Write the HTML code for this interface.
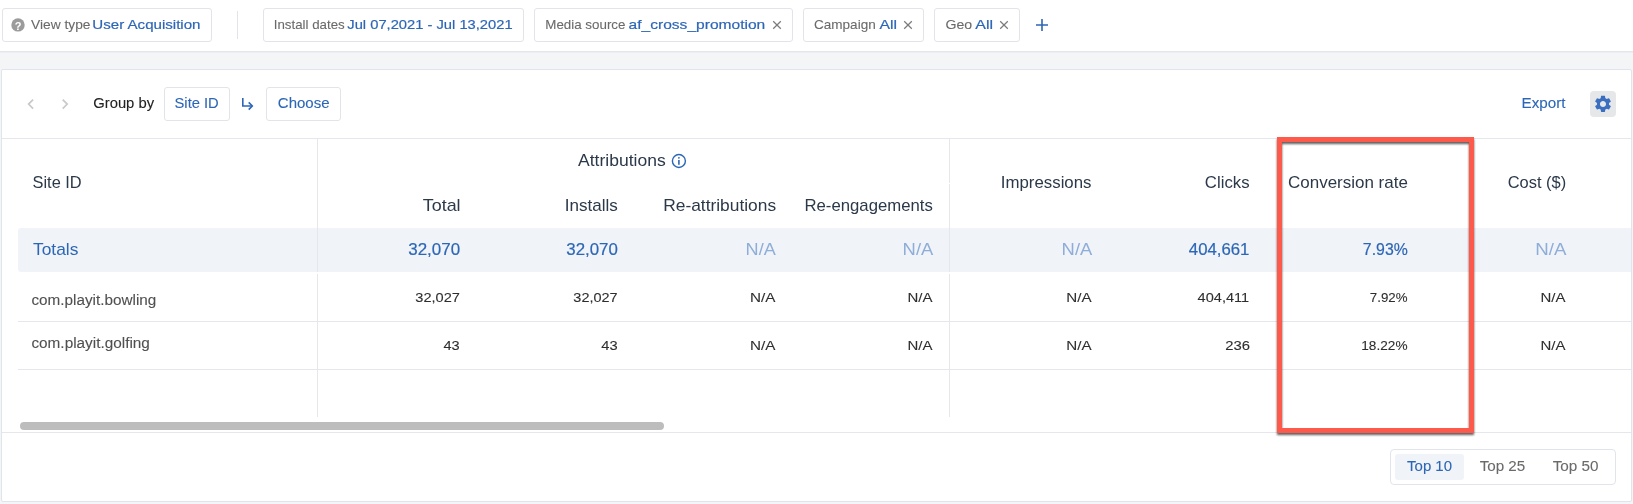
<!DOCTYPE html>
<html><head><meta charset="utf-8"><style>
html,body{margin:0;padding:0;}
body{width:1633px;height:504px;position:relative;overflow:hidden;background:#f4f5f7;font-family:"Liberation Sans",sans-serif;}
svg{position:absolute;left:0;top:0;will-change:transform;}
svg text{font-family:"Liberation Sans",sans-serif;}
</style></head><body>
<div style="position:absolute;left:0px;top:0px;width:1633px;height:51px;box-sizing:border-box;background:#fff"></div><div style="position:absolute;left:0px;top:51px;width:1633px;height:1px;box-sizing:border-box;background:#e3e6eb"></div><div style="position:absolute;left:0px;top:52px;width:1633px;height:1px;box-sizing:border-box;background:#eceef1"></div><div style="position:absolute;left:2px;top:8px;width:210px;height:34px;box-sizing:border-box;border:1px solid #e1e4ea;border-radius:3px;background:#fff"></div><div style="position:absolute;left:263px;top:8px;width:261px;height:34px;box-sizing:border-box;border:1px solid #e1e4ea;border-radius:3px;background:#fff"></div><div style="position:absolute;left:534px;top:8px;width:259px;height:34px;box-sizing:border-box;border:1px solid #e1e4ea;border-radius:3px;background:#fff"></div><div style="position:absolute;left:803px;top:8px;width:121px;height:34px;box-sizing:border-box;border:1px solid #e1e4ea;border-radius:3px;background:#fff"></div><div style="position:absolute;left:934px;top:8px;width:86px;height:34px;box-sizing:border-box;border:1px solid #e1e4ea;border-radius:3px;background:#fff"></div><div style="position:absolute;left:237px;top:11px;width:1px;height:28px;box-sizing:border-box;background:#e1e4ea"></div><div style="position:absolute;left:1px;top:69px;width:1631px;height:433px;box-sizing:border-box;border:1px solid #e1e4ea;border-radius:2px;background:#fff"></div><div style="position:absolute;left:164px;top:87px;width:66px;height:34px;box-sizing:border-box;border:1px solid #e1e4ea;border-radius:3px"></div><div style="position:absolute;left:266px;top:87px;width:75px;height:34px;box-sizing:border-box;border:1px solid #e1e4ea;border-radius:3px"></div><div style="position:absolute;left:1590px;top:91px;width:26px;height:26px;box-sizing:border-box;background:#e6e7e9;border-radius:4px"></div><div style="position:absolute;left:2px;top:138px;width:1629px;height:1px;box-sizing:border-box;background:#e5e7ed"></div><div style="position:absolute;left:18px;top:228px;width:1613px;height:44px;box-sizing:border-box;background:#f0f3f8;border-radius:3px 0 0 3px"></div><div style="position:absolute;left:317px;top:139px;width:1px;height:133px;box-sizing:border-box;background:#e5e7ed"></div><div style="position:absolute;left:317px;top:274px;width:1px;height:143px;box-sizing:border-box;background:#e5e7ed"></div><div style="position:absolute;left:949px;top:139px;width:1px;height:44px;box-sizing:border-box;background:#e5e7ed"></div><div style="position:absolute;left:949px;top:184px;width:1px;height:88px;box-sizing:border-box;background:#e5e7ed"></div><div style="position:absolute;left:949px;top:274px;width:1px;height:143px;box-sizing:border-box;background:#e5e7ed"></div><div style="position:absolute;left:18px;top:321px;width:1613px;height:1px;box-sizing:border-box;background:#e5e7ed"></div><div style="position:absolute;left:18px;top:369px;width:1613px;height:1px;box-sizing:border-box;background:#e5e7ed"></div><div style="position:absolute;left:20px;top:422px;width:644px;height:8px;box-sizing:border-box;background:#bdbdbd;border-radius:4px"></div><div style="position:absolute;left:2px;top:432px;width:1629px;height:1px;box-sizing:border-box;background:#e5e7ed"></div><div style="position:absolute;left:1390px;top:449px;width:226px;height:36px;box-sizing:border-box;border:1px solid #e1e4ea;border-radius:4px"></div><div style="position:absolute;left:1395px;top:454px;width:69px;height:26px;box-sizing:border-box;background:#f0f3f8;border-radius:3px"></div>
<svg width="1633" height="504" viewBox="0 0 1633 504">

<circle cx="18" cy="24.9" r="6.7" fill="#9b9b9b"/>
<text x="18" y="29.6" font-size="11" font-weight="bold" fill="#fff" text-anchor="middle">?</text>
<g stroke="#7c7c7c" stroke-width="1.25" fill="none">
<path d="M773.2 21.2 L780.8 28.8 M780.8 21.2 L773.2 28.8"/>
<path d="M904.2 21.2 L911.8 28.8 M911.8 21.2 L904.2 28.8"/>
<path d="M1000.2 21.2 L1007.8 28.8 M1007.8 21.2 L1000.2 28.8"/>
</g>
<path d="M1036 25 H1048 M1042 19 V31" stroke="#2c66b6" stroke-width="1.6" fill="none"/>
<g stroke="#c9c9c9" stroke-width="1.7" fill="none">
<path d="M33.1 99.6 L28.6 104.1 L33.1 108.6"/>
<path d="M62.7 99.6 L67.2 104.1 L62.7 108.6"/>
</g>
<g stroke="#2c66b6" stroke-width="1.6" fill="none">
<path d="M242.8 98 V106 H252"/>
<path d="M248.7 102.4 L252.3 106 L248.7 109.6"/>
</g>
<circle cx="678.9" cy="161" r="6.5" stroke="#2c66b6" stroke-width="1.4" fill="none"/>
<path d="M678.9 160.1 V164.7" stroke="#2c66b6" stroke-width="1.6"/>
<circle cx="678.9" cy="157.8" r="0.9" fill="#2c66b6"/>

<path transform="translate(1592.920 93.820) scale(0.84)" d="M19.14,12.94c0.04-0.3,0.06-0.61,0.06-0.94c0-0.32-0.02-0.64-0.07-0.94l2.03-1.58c0.18-0.14,0.23-0.41,0.12-0.61l-1.92-3.32c-0.12-0.22-0.37-0.29-0.59-0.22l-2.39,0.96c-0.5-0.38-1.03-0.7-1.62-0.94L14.4,2.81c-0.04-0.24-0.24-0.41-0.48-0.41h-3.84c-0.24,0-0.43,0.17-0.47,0.41L9.25,5.35C8.66,5.59,8.12,5.92,7.63,6.29L5.24,5.33c-0.22-0.08-0.47,0-0.59,0.22L2.74,8.87C2.62,9.08,2.66,9.34,2.86,9.48l2.03,1.58C4.84,11.36,4.8,11.69,4.8,12s0.02,0.64,0.07,0.94l-2.03,1.58c-0.18,0.14-0.23,0.41-0.12,0.61l1.92,3.32c0.12,0.22,0.37,0.29,0.59,0.22l2.39-0.96c0.5,0.38,1.03,0.7,1.62,0.94l0.36,2.54c0.05,0.24,0.24,0.41,0.48,0.41h3.84c0.24,0,0.44-0.17,0.47-0.41l0.36-2.54c0.59-0.24,1.13-0.56,1.62-0.94l2.39,0.96c0.22,0.08,0.47,0,0.59-0.22l1.92-3.32c0.12-0.22,0.07-0.47-0.12-0.61L19.14,12.94z M12,15.6c-1.98,0-3.6-1.62-3.6-3.6s1.62-3.6,3.6-3.6s3.6,1.62,3.6,3.6S13.98,15.6,12,15.6z" fill="#3a6ebf"/>
<text x="31.08" y="29.00" font-size="13.5" fill="#6a6a6a" stroke="#6a6a6a" stroke-width="0.1" textLength="59.42" lengthAdjust="spacingAndGlyphs">View type</text><text x="92.30" y="29.00" font-size="13.5" fill="#2c66b6" stroke="#2c66b6" stroke-width="0.2" textLength="108.22" lengthAdjust="spacingAndGlyphs">User Acquisition</text><text x="273.77" y="29.00" font-size="13.5" fill="#6a6a6a" stroke="#6a6a6a" stroke-width="0.1" textLength="70.94" lengthAdjust="spacingAndGlyphs">Install dates</text><text x="347.30" y="29.00" font-size="13.5" fill="#2c66b6" stroke="#2c66b6" stroke-width="0.2" textLength="165.31" lengthAdjust="spacingAndGlyphs">Jul 07,2021 - Jul 13,2021</text><text x="545.27" y="29.00" font-size="13.5" fill="#6a6a6a" stroke="#6a6a6a" stroke-width="0.1" textLength="80.20" lengthAdjust="spacingAndGlyphs">Media source</text><text x="628.60" y="29.00" font-size="13.5" fill="#2c66b6" stroke="#2c66b6" stroke-width="0.2" textLength="136.66" lengthAdjust="spacingAndGlyphs">af_cross_promotion</text><text x="814.00" y="29.00" font-size="13.5" fill="#6a6a6a" stroke="#6a6a6a" stroke-width="0.1" textLength="61.72" lengthAdjust="spacingAndGlyphs">Campaign</text><text x="879.52" y="29.00" font-size="13.5" fill="#2c66b6" stroke="#2c66b6" stroke-width="0.2" textLength="17.54" lengthAdjust="spacingAndGlyphs">All</text><text x="945.42" y="29.00" font-size="13.5" fill="#6a6a6a" stroke="#6a6a6a" stroke-width="0.1" textLength="26.73" lengthAdjust="spacingAndGlyphs">Geo</text><text x="975.26" y="29.00" font-size="13.5" fill="#2c66b6" stroke="#2c66b6" stroke-width="0.2" textLength="17.77" lengthAdjust="spacingAndGlyphs">All</text><text x="93.24" y="108.00" font-size="14" fill="#222222" stroke="#222222" stroke-width="0.1" textLength="60.83" lengthAdjust="spacingAndGlyphs">Group by</text><text x="174.55" y="108.00" font-size="14" fill="#2c66b6" stroke="#2c66b6" stroke-width="0.1" textLength="44.18" lengthAdjust="spacingAndGlyphs">Site ID</text><text x="277.80" y="108.00" font-size="14" fill="#2c66b6" stroke="#2c66b6" stroke-width="0.1" textLength="51.70" lengthAdjust="spacingAndGlyphs">Choose</text><text x="1521.50" y="108.00" font-size="14" fill="#2c66b6" stroke="#2c66b6" stroke-width="0.1" textLength="43.97" lengthAdjust="spacingAndGlyphs">Export</text><text x="32.56" y="188.00" font-size="17" fill="#2b3949" stroke="#2b3949" stroke-width="0.0" textLength="49.17" lengthAdjust="spacingAndGlyphs">Site ID</text><text x="578.04" y="166.00" font-size="17" fill="#2b3949" stroke="#2b3949" stroke-width="0.0" textLength="87.61" lengthAdjust="spacingAndGlyphs">Attributions</text><text x="422.75" y="211.00" font-size="17" fill="#2b3949" stroke="#2b3949" stroke-width="0.0" textLength="37.84" lengthAdjust="spacingAndGlyphs">Total</text><text x="564.71" y="211.00" font-size="17" fill="#2b3949" stroke="#2b3949" stroke-width="0.0" textLength="53.09" lengthAdjust="spacingAndGlyphs">Installs</text><text x="663.21" y="211.00" font-size="17" fill="#2b3949" stroke="#2b3949" stroke-width="0.0" textLength="112.89" lengthAdjust="spacingAndGlyphs">Re-attributions</text><text x="804.51" y="211.00" font-size="17" fill="#2b3949" stroke="#2b3949" stroke-width="0.0" textLength="128.27" lengthAdjust="spacingAndGlyphs">Re-engagements</text><text x="1000.82" y="188.00" font-size="17" fill="#2b3949" stroke="#2b3949" stroke-width="0.0" textLength="90.68" lengthAdjust="spacingAndGlyphs">Impressions</text><text x="1204.87" y="188.00" font-size="17" fill="#2b3949" stroke="#2b3949" stroke-width="0.0" textLength="44.74" lengthAdjust="spacingAndGlyphs">Clicks</text><text x="1288.04" y="188.00" font-size="17" fill="#2b3949" stroke="#2b3949" stroke-width="0.0" textLength="119.85" lengthAdjust="spacingAndGlyphs">Conversion rate</text><text x="1507.74" y="188.00" font-size="17" fill="#2b3949" stroke="#2b3949" stroke-width="0.0" textLength="58.44" lengthAdjust="spacingAndGlyphs">Cost ($)</text><text x="32.96" y="255.00" font-size="17" fill="#2c66b6" stroke="#2c66b6" stroke-width="0.0" textLength="45.40" lengthAdjust="spacingAndGlyphs">Totals</text><text x="408.27" y="255.00" font-size="16.6" fill="#2c66b6" stroke="#2c66b6" stroke-width="0.2" textLength="51.80" lengthAdjust="spacingAndGlyphs">32,070</text><text x="566.28" y="255.00" font-size="16.6" fill="#2c66b6" stroke="#2c66b6" stroke-width="0.2" textLength="51.57" lengthAdjust="spacingAndGlyphs">32,070</text><text x="745.61" y="255.00" font-size="16.6" fill="#8eadd8" stroke="#8eadd8" stroke-width="0.0" textLength="30.16" lengthAdjust="spacingAndGlyphs">N/A</text><text x="902.61" y="255.00" font-size="16.6" fill="#8eadd8" stroke="#8eadd8" stroke-width="0.0" textLength="30.67" lengthAdjust="spacingAndGlyphs">N/A</text><text x="1061.61" y="255.00" font-size="16.6" fill="#8eadd8" stroke="#8eadd8" stroke-width="0.0" textLength="30.67" lengthAdjust="spacingAndGlyphs">N/A</text><text x="1188.85" y="255.00" font-size="16.6" fill="#2c66b6" stroke="#2c66b6" stroke-width="0.2" textLength="60.57" lengthAdjust="spacingAndGlyphs">404,661</text><text x="1362.87" y="255.00" font-size="16.6" fill="#2c66b6" stroke="#2c66b6" stroke-width="0.2" textLength="44.97" lengthAdjust="spacingAndGlyphs">7.93%</text><text x="1535.25" y="255.00" font-size="16.6" fill="#8eadd8" stroke="#8eadd8" stroke-width="0.0" textLength="31.18" lengthAdjust="spacingAndGlyphs">N/A</text><text x="31.40" y="305.00" font-size="14" fill="#505050" stroke="#505050" stroke-width="0.1" textLength="124.93" lengthAdjust="spacingAndGlyphs">com.playit.bowling</text><text x="415.35" y="302.00" font-size="13.3" fill="#2e2e2e" stroke="#2e2e2e" stroke-width="0.1" textLength="44.57" lengthAdjust="spacingAndGlyphs">32,027</text><text x="573.37" y="302.00" font-size="13.3" fill="#2e2e2e" stroke="#2e2e2e" stroke-width="0.1" textLength="44.25" lengthAdjust="spacingAndGlyphs">32,027</text><text x="750.11" y="302.00" font-size="13.3" fill="#2e2e2e" stroke="#2e2e2e" stroke-width="0.1" textLength="25.40" lengthAdjust="spacingAndGlyphs">N/A</text><text x="907.42" y="302.00" font-size="13.3" fill="#2e2e2e" stroke="#2e2e2e" stroke-width="0.1" textLength="24.97" lengthAdjust="spacingAndGlyphs">N/A</text><text x="1066.28" y="302.00" font-size="13.3" fill="#2e2e2e" stroke="#2e2e2e" stroke-width="0.1" textLength="25.30" lengthAdjust="spacingAndGlyphs">N/A</text><text x="1197.64" y="302.00" font-size="13.3" fill="#2e2e2e" stroke="#2e2e2e" stroke-width="0.1" textLength="51.53" lengthAdjust="spacingAndGlyphs">404,411</text><text x="1369.86" y="302.00" font-size="13.3" fill="#2e2e2e" stroke="#2e2e2e" stroke-width="0.1" textLength="37.68" lengthAdjust="spacingAndGlyphs">7.92%</text><text x="1540.42" y="302.00" font-size="13.3" fill="#2e2e2e" stroke="#2e2e2e" stroke-width="0.1" textLength="24.97" lengthAdjust="spacingAndGlyphs">N/A</text><text x="31.40" y="348.00" font-size="14" fill="#505050" stroke="#505050" stroke-width="0.1" textLength="118.52" lengthAdjust="spacingAndGlyphs">com.playit.golfing</text><text x="443.45" y="350.00" font-size="13.3" fill="#2e2e2e" stroke="#2e2e2e" stroke-width="0.1" textLength="16.26" lengthAdjust="spacingAndGlyphs">43</text><text x="601.23" y="350.00" font-size="13.3" fill="#2e2e2e" stroke="#2e2e2e" stroke-width="0.1" textLength="16.36" lengthAdjust="spacingAndGlyphs">43</text><text x="750.11" y="350.00" font-size="13.3" fill="#2e2e2e" stroke="#2e2e2e" stroke-width="0.1" textLength="25.40" lengthAdjust="spacingAndGlyphs">N/A</text><text x="907.42" y="350.00" font-size="13.3" fill="#2e2e2e" stroke="#2e2e2e" stroke-width="0.1" textLength="24.97" lengthAdjust="spacingAndGlyphs">N/A</text><text x="1066.28" y="350.00" font-size="13.3" fill="#2e2e2e" stroke="#2e2e2e" stroke-width="0.1" textLength="25.30" lengthAdjust="spacingAndGlyphs">N/A</text><text x="1225.17" y="350.00" font-size="13.3" fill="#2e2e2e" stroke="#2e2e2e" stroke-width="0.1" textLength="24.75" lengthAdjust="spacingAndGlyphs">236</text><text x="1361.29" y="350.00" font-size="13.3" fill="#2e2e2e" stroke="#2e2e2e" stroke-width="0.1" textLength="46.25" lengthAdjust="spacingAndGlyphs">18.22%</text><text x="1540.42" y="350.00" font-size="13.3" fill="#2e2e2e" stroke="#2e2e2e" stroke-width="0.1" textLength="24.97" lengthAdjust="spacingAndGlyphs">N/A</text><text x="1407.08" y="471.00" font-size="15" fill="#2c66b6" stroke="#2c66b6" stroke-width="0.1" textLength="44.94" lengthAdjust="spacingAndGlyphs">Top 10</text><text x="1479.70" y="471.00" font-size="15" fill="#6a6a6a" stroke="#6a6a6a" stroke-width="0.1" textLength="45.56" lengthAdjust="spacingAndGlyphs">Top 25</text><text x="1552.69" y="471.00" font-size="15" fill="#6a6a6a" stroke="#6a6a6a" stroke-width="0.1" textLength="45.85" lengthAdjust="spacingAndGlyphs">Top 50</text>
</svg>
<div style="position:absolute;left:1277px;top:137px;width:197px;height:296px;box-sizing:border-box;border:5px solid #fe5a4c;filter:drop-shadow(0.6px 2.6px 1.2px rgba(40,40,40,0.75))"></div>
</body></html>
